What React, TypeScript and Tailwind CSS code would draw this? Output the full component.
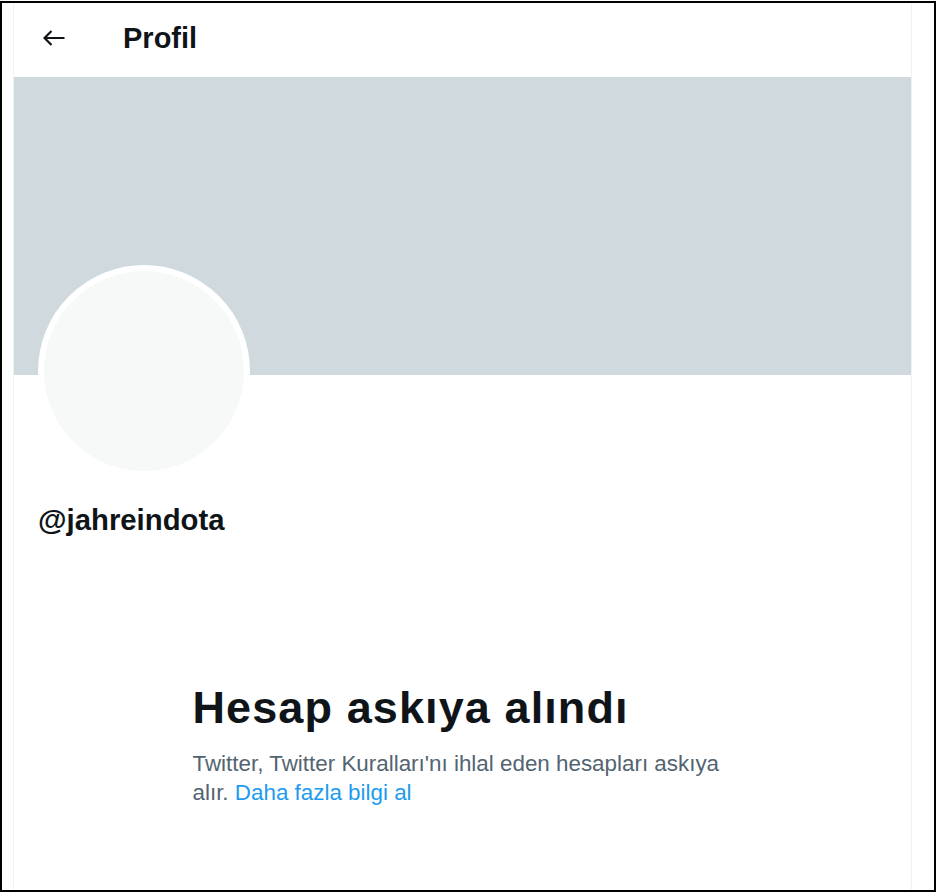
function BackArrow() {
  return (
    <svg viewBox="0 0 22 16" className="h-[16px] w-[22px]" fill="none">
      <path d="M1.5 8H21.5M8.5 1L1.5 8L8.5 15" stroke="#0f1419" strokeWidth="2.2" />
    </svg>
  );
}

export default function App() {
  return (
    <div className="bg-white pt-px" style={{ fontFamily: '"Liberation Sans", Arial, sans-serif' }}>
      <div className="h-[891px] w-[936px] border-2 border-black pl-[11px]">
        <div className="flex h-full w-[899px] flex-col border-x border-[#eff3f4]">
          <div className="flex h-[74px] items-center pb-[5px] pl-[29px]">
            <BackArrow />
            <h1 className="ml-[58px] text-[29px] font-bold leading-[36px] text-[#0f1419]">Profil</h1>
          </div>

          <div className="h-[298px] bg-[#cfd9de]" />

          <div className="-mt-[110px] ml-[24px] h-[212px] w-[212px] rounded-full border-[6px] border-white bg-[#f7f9f9]" />

          <p className="ml-[24px] mt-[25px] text-[29.3px] font-bold leading-[36px] text-[#0f1419]">@jahreindota</p>

          <div className="mx-auto mt-[144px] w-[540px]">
            <h2 className="text-[45px] font-extrabold leading-[52px] tracking-[1.1px] text-[#0f1419]">
              Hesap askıya alındı
            </h2>
            <p className="mt-[15px] text-[22.4px] leading-[29px] text-[#536471]">
              Twitter, Twitter Kuralları'nı ihlal eden hesapları askıya alır.{" "}
              <span className="text-[#1d9bf0]">Daha fazla bilgi al</span>
            </p>
          </div>
        </div>
      </div>
    </div>
  );
}
